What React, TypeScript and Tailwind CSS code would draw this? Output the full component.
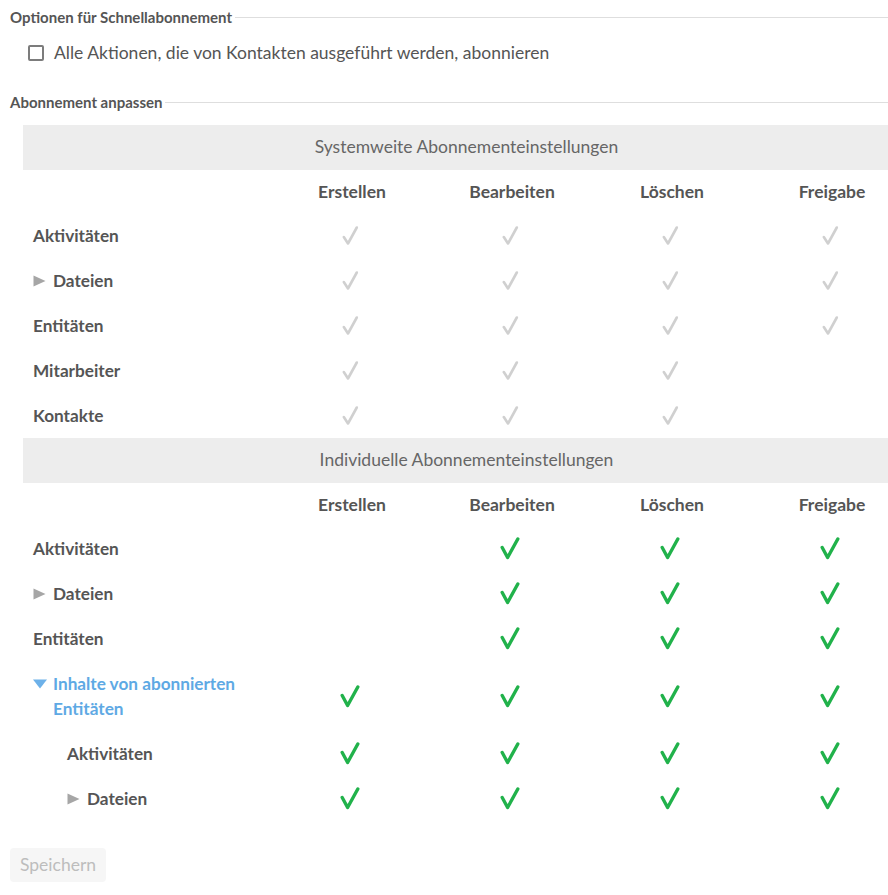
import React from "react";

type Row = {
  label: string;
  checks: boolean[];
  arrow?: "right" | "down";
  indent?: boolean;
  blue?: boolean;
};

const GrayCheck = () => (
  <svg width="18" height="21" viewBox="0 0 18 21" aria-hidden="true">
    <path d="M2.8 12 L7 18.5 L15.8 2.5" fill="none" stroke="#d0d0d0" strokeWidth="2.6" strokeLinecap="round" strokeLinejoin="round" />
  </svg>
);

const GreenCheck = () => (
  <svg width="20" height="23" viewBox="0 0 20 23" aria-hidden="true">
    <path d="M2.2 10.5 L7.6 20.5 L17.8 2" fill="none" stroke="#21b24b" strokeWidth="3.4" strokeLinecap="round" strokeLinejoin="round" />
  </svg>
);

const RightTri = () => (
  <svg width="13" height="12" viewBox="0 0 13 12" aria-hidden="true" className="shrink-0">
    <path d="M0.5 0.5 L12.5 6 L0.5 11.5 Z" fill="#a6a6a6" />
  </svg>
);

const DownTri = () => (
  <svg width="14" height="10" viewBox="0 0 14 10" aria-hidden="true" className="shrink-0">
    <path d="M0 0.5 L14 0.5 L7 9.5 Z" fill="#6db1e9" />
  </svg>
);

const cols = ["Erstellen", "Bearbeiten", "Löschen", "Freigabe"];

const systemRows: Row[] = [
  { label: "Aktivitäten", checks: [true, true, true, true] },
  { label: "Dateien", arrow: "right", checks: [true, true, true, true] },
  { label: "Entitäten", checks: [true, true, true, true] },
  { label: "Mitarbeiter", checks: [true, true, true, false] },
  { label: "Kontakte", checks: [true, true, true, false] },
];

const indivRows: Row[] = [
  { label: "Aktivitäten", checks: [false, true, true, true] },
  { label: "Dateien", arrow: "right", checks: [false, true, true, true] },
  { label: "Entitäten", checks: [false, true, true, true] },
  { label: "Inhalte von abonnierten Entitäten", arrow: "down", blue: true, checks: [true, true, true, true] },
  { label: "Aktivitäten", indent: true, checks: [true, true, true, true] },
  { label: "Dateien", indent: true, arrow: "right", checks: [true, true, true, true] },
];

function Legend({ text }: { text: string }) {
  return (
    <div className="flex items-center pl-[10px]">
      <span className="text-[15px] leading-[18px] font-bold text-[#555]">{text}</span>
      <div className="ml-[3px] h-px flex-1 bg-[#dedede]" />
    </div>
  );
}

function SectionHeader({ text, h }: { text: string; h: string }) {
  return (
    <div className={`${h} flex items-center justify-center bg-[#ededed] text-[17.5px] text-[#666]`}>
      {text}
    </div>
  );
}

function ColHeaders() {
  return (
    <div className="grid h-[43px] grid-cols-[247px_160px_160px_160px_160px] items-center pt-[2px]">
      <div />
      {cols.map((c) => (
        <div key={c} className="pl-[4px] text-center text-[17.5px] font-bold text-[#555]">
          {c}
        </div>
      ))}
    </div>
  );
}

function TableRow({ row, green }: { row: Row; green: boolean }) {
  return (
    <div className="grid grid-cols-[247px_160px_160px_160px_160px] items-center">
      <div className={`flex items-start py-[10px] pr-[10px] ${row.indent ? "pl-[44px]" : "pl-[10px]"}`}>
        {row.arrow && (
          <div className="flex h-[25px] w-[20px] shrink-0 items-center">
            {row.arrow === "right" ? <RightTri /> : <DownTri />}
          </div>
        )}
        <span
          className={`text-[17.2px] leading-[25px] font-bold ${row.blue ? "text-[#5ea9e4]" : "text-[#555]"}`}
        >
          {row.label}
        </span>
      </div>
      {row.checks.map((c, i) => (
        <div key={i} className="flex items-center justify-center">
          {c ? green ? <GreenCheck /> : <GrayCheck /> : null}
        </div>
      ))}
    </div>
  );
}

export default function App() {
  return (
    <div className="w-[888px] overflow-hidden bg-white font-['Lato',sans-serif] text-[#555]">
      <div className="pt-[8px]">
        <Legend text="Optionen für Schnellabonnement" />
      </div>
      <div className="mt-[15px] flex items-center pl-[28px]">
        <div className="h-[16px] w-[16px] rounded-[2px] border-2 border-[#7c7c7c] bg-white" />
        <span className="ml-[10px] text-[17.5px] leading-[24px] text-[#555]">
          Alle Aktionen, die von Kontakten ausgeführt werden, abonnieren
        </span>
      </div>
      <div className="mt-[28px]">
        <Legend text="Abonnement anpassen" />
      </div>
      <div className="ml-[23px] mt-[14px] w-[887px]">
        <SectionHeader text="Systemweite Abonnementeinstellungen" h="h-[45px]" />
        <ColHeaders />
        {systemRows.map((r, i) => (
          <TableRow key={"s" + i} row={r} green={false} />
        ))}
        <SectionHeader text="Individuelle Abonnementeinstellungen" h="h-[45px]" />
        <ColHeaders />
        {indivRows.map((r, i) => (
          <TableRow key={"i" + i} row={r} green={true} />
        ))}
      </div>
      <div className="mt-[27px] pb-[13px] pl-[10px]">
        <button className="h-[34px] rounded-[4px] bg-[#f6f6f6] px-[10px] text-[17.5px] text-[#bdbdbd]">
          Speichern
        </button>
      </div>
    </div>
  );
}
